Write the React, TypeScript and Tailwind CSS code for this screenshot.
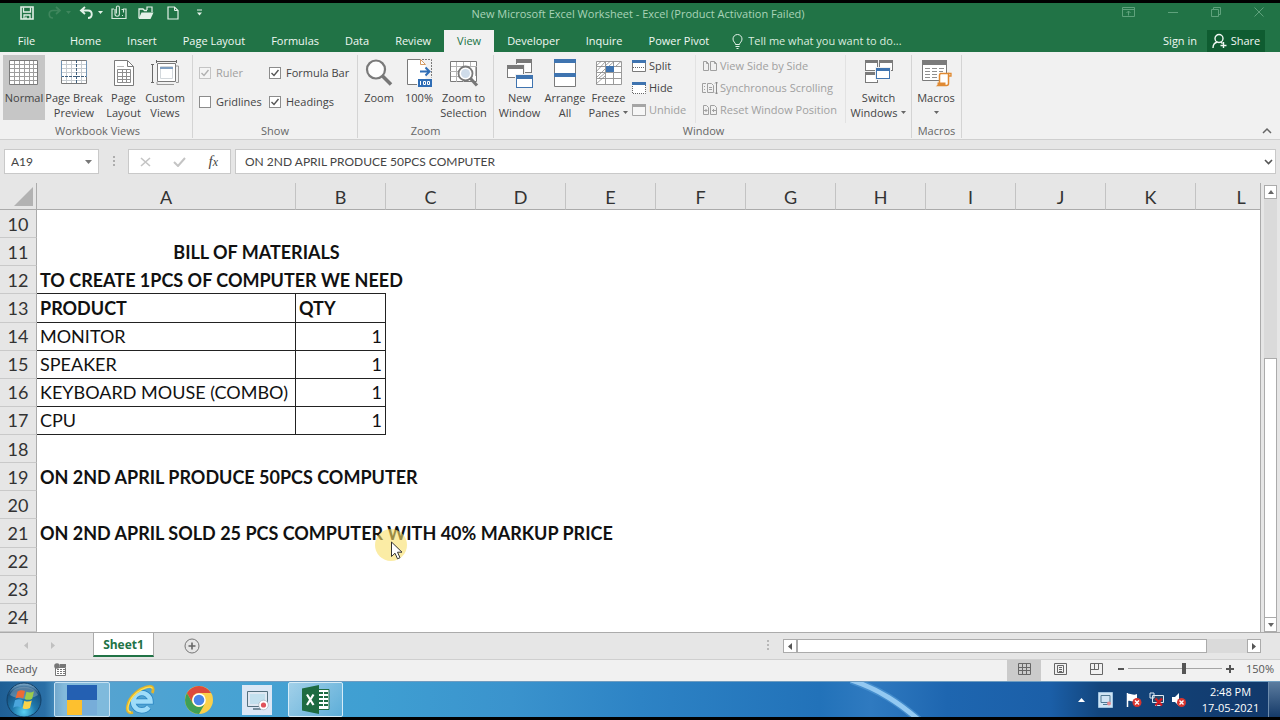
import React from "react";

type IconProps = { children: React.ReactNode; w?: number; h?: number };

function Svg({ children, w = 32, h = 32 }: IconProps) {
  return (
    <svg width={w} height={h} viewBox={`0 0 ${w} ${h}`} fill="none" aria-hidden="true" className="block shrink-0">
      {children}
    </svg>
  );
}

const GRAY = "#7a7a7a";
const BLUE = "#3f74b0";

/* ---------- quick access toolbar ---------- */

function SaveIcon() {
  return (
    <Svg w={14} h={14}>
      <path d="M1 1h12v12H1z" stroke="#e3f1e8" strokeWidth="1.6" />
      <path d="M3.5 1.5v4.5h7V1.5" stroke="#e3f1e8" strokeWidth="1.3" />
      <path d="M4 13V9h6v4M6 10.5V13" stroke="#e3f1e8" strokeWidth="1.3" />
    </Svg>
  );
}

function UndoIcon() {
  return (
    <Svg w={15} h={14}>
      <path d="M6 1L2 4.500l4 3.500M2.500 4.500H9c5 0 5 7.500 0 7.500" stroke="#e3f1e8" strokeWidth="1.9" />
    </Svg>
  );
}

function RedoIcon() {
  return (
    <Svg w={15} h={14}>
      <path d="M9 1l4 3.500-4 3.500M12.500 4.500H6c-5 0-5 7.500 0 7.500" stroke="#3f865d" strokeWidth="1.7" />
    </Svg>
  );
}

function Caret({ color }: { color: string }) {
  return (
    <Svg w={5} h={3}>
      <path d="M0 0h5L2.500 3z" fill={color} />
    </Svg>
  );
}

function AttachIcon() {
  return (
    <Svg w={16} h={15}>
      <path d="M3 4H1v9.500h14V4h-3" stroke="#d5e9dc" strokeWidth="1.2" />
      <path d="M4 4v5a2.200 2.200 0 004.400 0V2.500a1.500 1.500 0 00-3 0V8.500M10.500 4.500h2.500M12.500 4.500v3M11 10.500h1" stroke="#d5e9dc" strokeWidth="1.100" />
    </Svg>
  );
}

function FolderIcon() {
  return (
    <Svg w={16} h={14}>
      <path d="M1 12V3h4l1.500 1.500H9" stroke="#e3f1e8" strokeWidth="1.300" />
      <path d="M9 4V1h5v5" stroke="#e3f1e8" strokeWidth="1.200" />
      <path d="M3.500 6.500h12L12.500 13H.5z" fill="#e3f1e8" />
    </Svg>
  );
}

function NewPageIcon() {
  return (
    <Svg w={12} h={14}>
      <path d="M1 1h6.500L11 4.500V13H1z" stroke="#e3f1e8" strokeWidth="1.200" />
      <path d="M7.500 1v3.500H11" stroke="#e3f1e8" />
    </Svg>
  );
}

/* ---------- ribbon icons ---------- */

function NormalIcon() {
  return (
    <Svg>
      <path d="M1.500 2.500h28v24h-28z" fill="#fff" stroke={GRAY} />
      <path d="M2 6.500h27M2 10.500h27M2 14.500h27M2 18.500h27M2 22.500h27M6.500 3v23M11.500 3v23M16.500 3v23M21.500 3v23M25.500 3v23" stroke="#9d9d9d" />
    </Svg>
  );
}

function PageBreakIcon() {
  return (
    <Svg>
      <path d="M3.500 2.500h25v23h-25z" fill="#fff" stroke={GRAY} />
      <path d="M4 6.500h24M4 10.500h24M4 14.500h24M4 22.500h24M8.500 3v22M13.500 3v22M23.500 3v22" stroke="#c5cbd0" />
      <path d="M18.500 2v24M3 18.500h26" stroke="#3f5f7d" strokeDasharray="3 1" />
      <path d="M3.500 3v16M28.500 3v16" stroke="#6f93b5" />
    </Svg>
  );
}

function PageLayoutIcon() {
  return (
    <Svg>
      <path d="M6.500 2.500h13l6 6v19h-19z" fill="#fff" stroke={GRAY} />
      <path d="M19.500 3v5.500h6" stroke={GRAY} />
      <path d="M9.500 11.500h13v13h-13zM10 14.500h12M10 18.500h12M10 21.500h12M14.500 12v12M18.500 12v12" stroke="#8d8d8d" />
      <path d="M9 8.500h7" stroke="#b5b5b5" />
    </Svg>
  );
}

function CustomViewsIcon() {
  return (
    <Svg>
      <path d="M8.500 5.500h18v18h-18z" fill="#fff" stroke={GRAY} />
      <path d="M8 24v2.500h17M27 8h2.500v16.500H27" stroke="#9a9a9a" />
      <path d="M11.500 8.500h12v12h-12z" stroke="#d3d8dc" />
      <path d="M11 10h13" stroke="#7f9fc2" strokeWidth="2" />
      <path d="M3.500 7v17M2 6.500h3M2 24.500h3M8 3.500h19M7.500 2v3M27.500 2v3" stroke="#686868" />
    </Svg>
  );
}

function ZoomIcon() {
  return (
    <Svg>
      <circle cx="13" cy="11.500" r="9" fill="#fdfdfd" stroke={GRAY} strokeWidth="2.200" />
      <path d="M19.500 18l8.500 8.500" stroke="#777" strokeWidth="3.600" />
    </Svg>
  );
}

function HundredIcon() {
  return (
    <Svg>
      <path d="M4.500 1.500h13l5 5v20h-18z" fill="#fff" />
      <path d="M14 26.500H4.500v-25h13" stroke={GRAY} />
      <path d="M17.500 1.500v5h5" stroke="#d49a62" />
      <path d="M17.500 1.500l5 5" stroke="#d49a62" />
      <path d="M19 1.500h9.500v18" stroke={GRAY} strokeDasharray="2 1" />
      <path d="M17 13.500h9M22.500 9.500l4 4-4 4" stroke="#2f6db5" strokeWidth="2" />
      <path d="M15 21h14v8H15z" fill="#2f6db5" />
      <path d="M17.500 23v4M20.500 23.500h2v3h-2zM24.500 23.500h2v3h-2z" stroke="#fff" />
    </Svg>
  );
}

function ZoomSelectionIcon() {
  return (
    <Svg>
      <path d="M2.500 3.500h26v20h-26z" fill="#fff" stroke={GRAY} />
      <path d="M3 8.500h26M3 18.500h8M2 13.500h8M8.500 4v20M15.500 4v5M22.500 4v5M15.500 23v1M27.500 9v9" stroke="#b3b3b3" />
      <circle cx="17.500" cy="15.500" r="7" fill="#fff" stroke={GRAY} strokeWidth="1.800" />
      <circle cx="17.500" cy="15.500" r="4.500" fill="#cfdcea" />
      <path d="M22.500 20.500l6.500 7" stroke="#777" strokeWidth="3.200" />
    </Svg>
  );
}

function MiniWindow({ x, y, w, h, bar, barH = 4 }: { x: number; y: number; w: number; h: number; bar: string; barH?: number }) {
  return (
    <g>
      <rect x={x + 0.5} y={y + 0.5} width={w - 1} height={h - 1} fill="#fff" stroke={bar} />
      <rect x={x} y={y} width={w} height={barH} fill={bar} />
    </g>
  );
}

function NewWindowIcon() {
  return (
    <Svg>
      <MiniWindow x={12} y={1} w={16} h={14} bar={GRAY} />
      <path d="M2 6h19v16H2z" fill="#f1f1f1" />
      <MiniWindow x={3} y={7} w={17} h={13} bar={GRAY} />
      <path d="M11 16h19v15H11z" fill="#f1f1f1" />
      <MiniWindow x={12} y={17} w={17} h={13} bar={BLUE} />
    </Svg>
  );
}

function ArrangeIcon() {
  return (
    <Svg>
      <path d="M5.500 2.500h21v26h-21z" fill="#fff" stroke={GRAY} />
      <path d="M5 1h22v4H5zM5 15h22v4H5z" fill={BLUE} />
    </Svg>
  );
}

function FreezeIcon() {
  return (
    <Svg>
      <path d="M3.500 3.500h25v23h-25z" fill="#fff" stroke="#9a9a9a" />
      <path d="M3 8.500h26M3 14.500h26M3 20.500h26M12.500 3v24M20.500 3v24" stroke="#9a9a9a" />
      <path d="M3 8l5-4.500M3 14l9-10M3 20l9-9M3 26l9-8M12 8l5-4.500M16 8l5-4.500M23 8l5-4.500M6 20l6-5" stroke="#8a8a8a" strokeWidth=".8" />
      <path d="M13 8h8v6h-8z" fill={BLUE} />
    </Svg>
  );
}

function SwitchIcon() {
  return (
    <Svg>
      <MiniWindow x={2} y={2} w={13} h={11} bar={GRAY} barH={3} />
      <MiniWindow x={16} y={2} w={14} h={11} bar={GRAY} barH={3} />
      <MiniWindow x={2} y={14} w={13} h={11} bar={GRAY} barH={3} />
      <path d="M12 9h16v13H12z" fill="#f1f1f1" />
      <MiniWindow x={13} y={10} w={14} h={11} bar={BLUE} barH={3} />
    </Svg>
  );
}

function MacrosIcon() {
  return (
    <Svg>
      <path d="M2.500 3.500h24v19h-24z" fill="#fff" stroke={GRAY} />
      <path d="M2 2h25v5H2z" fill={GRAY} />
      <path d="M5 10.500h5M12 10.500h5M19 10.500h5M5 13.500h5M12 13.500h5M19 13.500h4M5 16.500h5M12 16.500h5M5 19.500h5M12 19.500h5" stroke="#8f8f8f" />
      <path d="M20.500 15.500h8v10a2 2 0 01-2 2h-8a2 2 0 001-2v-8a2 2 0 011-2z" fill="#fff" stroke="#e08a33" strokeWidth="1.500" />
      <path d="M17.500 24.500h8v3.500h-8z" fill="#e08a33" />
      <path d="M28 15.500h3v2.500h-3" stroke="#e08a33" strokeWidth="1.300" />
    </Svg>
  );
}

function SplitIcon() {
  return (
    <Svg w={16} h={14}>
      <path d="M1.500 1.500h13v11h-13z" fill="#fff" stroke={GRAY} />
      <path d="M1 1h14v3H1z" fill={BLUE} />
      <path d="M2 8.500h12" stroke="#666" strokeDasharray="1 1" />
    </Svg>
  );
}

function HideIcon() {
  return (
    <Svg w={16} h={14}>
      <path d="M1.500 3v9.500h13V3" fill="#fff" stroke="#666" strokeDasharray="1 1" />
      <path d="M1 1h14v3H1z" fill={BLUE} />
    </Svg>
  );
}

function UnhideIcon() {
  return (
    <Svg w={16} h={14}>
      <path d="M1.500 1.500h13v11h-13z" fill="#f6f6f6" stroke="#a5a5a5" />
      <path d="M1 1h14v3H1z" fill="#a5a5a5" />
    </Svg>
  );
}

function SideBySideIcon() {
  return (
    <Svg w={16} h={14}>
      <path d="M1.500 2.500h3l2 2v7h-5zM8.500 2.500h4l2 2v7h-6z" stroke="#a0a0a0" />
      <path d="M4.500 2.500v2h2M12.500 2.500v2h2" stroke="#a0a0a0" />
    </Svg>
  );
}

function SyncIcon() {
  return (
    <Svg w={16} h={14}>
      <path d="M4 2.500H.5v9H4M5.500 2.500h4l2 2v7h-6z" stroke="#a0a0a0" />
      <path d="M2 5.500h1M2 8.500h1M7 6.500h3M7 8.500h3" stroke="#a0a0a0" />
      <path d="M14.500 1v12M13 2.500l1.500-1.500L16 2.500M13 11.500l1.500 1.500 1.500-1.500" stroke="#8c8c8c" />
    </Svg>
  );
}

function ResetIcon() {
  return (
    <Svg w={16} h={14}>
      <path d="M1.500 2.500h3l2 2v7h-5zM8.500 2.500h4l2 2v7h-6z" stroke="#a0a0a0" />
      <path d="M2 7.500h3.500M4 6v3M10 7.500h4M11.500 6v3" stroke="#a0a0a0" />
    </Svg>
  );
}

/* ---------- ribbon building blocks ---------- */

function BigButton({ icon, lines, width, active, caret }: { icon: React.ReactNode; lines: string[]; width: string; active?: boolean; caret?: boolean }) {
  return (
    <button type="button" className={`flex h-[65px] shrink-0 flex-col items-center pt-[3px] leading-[15px] ${width} ${active ? "bg-[#c6c6c6]" : ""}`}>
      {icon}
      <span className="whitespace-nowrap">{lines[0]}</span>
      <span className="flex h-[15px] items-center gap-1 whitespace-nowrap">
        {lines[1]}
        {caret && <Caret color="#666" />}
      </span>
    </button>
  );
}

function Group({ label, width, children }: { label: string; width: string; children: React.ReactNode }) {
  return (
    <section aria-label={label} className={`flex shrink-0 flex-col border-r border-[#d4d4d4] ${width}`}>
      <div className="flex h-[68px]">{children}</div>
      <div className="text-center leading-[15px] text-[#666]">{label}</div>
    </section>
  );
}

function Check({ label, checked, disabled }: { label: string; checked?: boolean; disabled?: boolean }) {
  return (
    <label className={`flex items-center gap-[5px] whitespace-nowrap ${disabled ? "text-[#a0a0a0]" : ""}`}>
      <span className="grid">
        <input
          type="checkbox"
          defaultChecked={checked}
          disabled={disabled}
          className="peer col-start-1 row-start-1 size-3 appearance-none border border-[#8c8c8c] bg-white disabled:border-[#c4c4c4] disabled:bg-[#f4f4f4]"
        />
        <svg viewBox="0 0 12 12" fill="none" aria-hidden="true" className="pointer-events-none invisible col-start-1 row-start-1 size-3 peer-checked:visible">
          <path d="M2.500 6l2.500 2.500L9.500 3" stroke={disabled ? "#b0b0b0" : "#555"} strokeWidth="1.400" />
        </svg>
      </span>
      {label}
    </label>
  );
}

function SmallButton({ icon, label, disabled }: { icon: React.ReactNode; label: string; disabled?: boolean }) {
  return (
    <button type="button" disabled={disabled} className="flex h-[22px] items-center gap-[2px] whitespace-nowrap disabled:text-[#a0a0a0]">
      {icon}
      {label}
    </button>
  );
}

/* ---------- header ---------- */

const tabs = ["Home", "Insert", "Page Layout", "Formulas", "Data", "Review", "View", "Developer", "Inquire", "Power Pivot"];

function TitleBar() {
  return (
    <div className="grid h-[27px] grid-cols-[1fr_auto_1fr] items-start">
      <div className="flex h-[19px] items-center pl-5">
        <button type="button" aria-label="Save" className="mr-[13px]"><SaveIcon /></button>
        <button type="button" aria-label="Redo" className="mr-2 flex items-center gap-1"><RedoIcon /><Caret color="#3f865d" /></button>
        <button type="button" aria-label="Undo" className="mr-2 flex items-center gap-1"><UndoIcon /><Caret color="#e3f1e8" /></button>
        <button type="button" aria-label="Attach" className="mr-[11px]"><AttachIcon /></button>
        <button type="button" aria-label="Open" className="mr-[13px]"><FolderIcon /></button>
        <button type="button" aria-label="New" className="mr-[18px]"><NewPageIcon /></button>
        <button type="button" aria-label="Customize toolbar">
          <Svg w={5} h={7}><path d="M0 1h5" stroke="#e3f1e8" /><path d="M0 3.500h5L2.500 6.500z" fill="#e3f1e8" /></Svg>
        </button>
      </div>
      <h1 className="pr-1 text-[11px] leading-[22px] text-[#a9d3b8]">New Microsoft Excel Worksheet - Excel (Product Activation Failed)</h1>
      <div className="flex h-[18px] items-center justify-end gap-[33px] pr-4">
        <button type="button" aria-label="Ribbon display options">
          <Svg w={13} h={10}><path d="M.5 .5h12v9H.5zM.5 2.500h12M6.500 8.500V4M4.500 6l2-2 2 2" stroke="#5fa27c" /></Svg>
        </button>
        <button type="button" aria-label="Minimize"><Svg w={10} h={10}><path d="M0 5.500h10" stroke="#5fa27c" /></Svg></button>
        <button type="button" aria-label="Restore"><Svg w={10} h={10}><path d="M.5 2.500h7v7h-7zM2.500 2.500v-2h7v7h-2" stroke="#5fa27c" /></Svg></button>
        <button type="button" aria-label="Close"><Svg w={10} h={10}><path d="M.5 .5l9 9M9.500 .5l-9 9" stroke="#5fa27c" /></Svg></button>
      </div>
    </div>
  );
}

function TabStrip() {
  return (
    <nav aria-label="Ribbon tabs" className="flex h-[22px] items-stretch whitespace-nowrap text-[11px] text-[#f0f8f3]">
      <button type="button" className="w-[53px] pt-px text-center">File</button>
      <div className="flex pl-1">
        {tabs.map((t) => (
          <button key={t} type="button" className={`px-[13px] ${t === "View" ? "bg-[#f1f1f1] text-[#217346]" : ""}`}>
            {t}
          </button>
        ))}
      </div>
      <label className="ml-[10px] flex flex-1 items-center gap-[5px]">
        <Svg w={11} h={15}>
          <path d="M3.500 10.500c0-2-2.500-2.500-2.500-5.500a4.500 4.500 0 019 0c0 3-2.500 3.500-2.500 5.500zM3.500 12.500h4M4.500 14.500h2" stroke="#e3f1e8" />
        </Svg>
        <input aria-label="Tell me" placeholder="Tell me what you want to do..." className="w-full bg-transparent outline-none placeholder:text-[#d9ecdf]" />
      </label>
      <button type="button" className="mr-[9px] px-px">Sign in</button>
      <button type="button" className="mr-[15px] flex w-[58px] items-center justify-center gap-1 bg-[#0f5c31]">
        <Svg w={15} h={16}>
          <circle cx="7" cy="5.500" r="4" stroke="#f0f8f3" strokeWidth="1.400" />
          <path d="M1 15c0-4 2-5.500 4.500-6M8.500 9l2 1.500M11.500 9v6M8.500 12.500h6" stroke="#f0f8f3" strokeWidth="1.400" />
        </Svg>
        Share
      </button>
    </nav>
  );
}

function Ribbon() {
  return (
    <div className="flex border-b border-[#cfcfcf] bg-[#f1f1f1] pt-[3px] pb-px text-[11px] text-[#444]">
      <Group label="Workbook Views" width="w-[193px] pl-[3px]">
        <BigButton icon={<NormalIcon />} lines={["Normal", ""]} width="w-[42px]" active />
        <BigButton icon={<PageBreakIcon />} lines={["Page Break", "Preview"]} width="w-[58px]" />
        <BigButton icon={<PageLayoutIcon />} lines={["Page", "Layout"]} width="w-[41px]" />
        <BigButton icon={<CustomViewsIcon />} lines={["Custom", "Views"]} width="w-[42px]" />
      </Group>
      <Group label="Show" width="w-[165px]">
        <div className="grid grid-cols-[70px_auto] content-start gap-y-[13px] pl-[6px] pt-[10px] leading-4">
          <Check label="Ruler" checked disabled />
          <Check label="Formula Bar" checked />
          <Check label="Gridlines" />
          <Check label="Headings" checked />
        </div>
      </Group>
      <Group label="Zoom" width="w-[136px]">
        <BigButton icon={<ZoomIcon />} lines={["Zoom", ""]} width="w-[42px]" />
        <BigButton icon={<HundredIcon />} lines={["100%", ""]} width="w-[38px]" />
        <BigButton icon={<ZoomSelectionIcon />} lines={["Zoom to", "Selection"]} width="w-[51px]" />
      </Group>
      <Group label="Window" width="w-[418px] pl-[2px]">
        <BigButton icon={<NewWindowIcon />} lines={["New", "Window"]} width="w-[47px]" />
        <BigButton icon={<ArrangeIcon />} lines={["Arrange", "All"]} width="w-[44px]" />
        <BigButton icon={<FreezeIcon />} lines={["Freeze", "Panes"]} width="w-[43px]" caret />
        <div className="ml-px flex w-[65px] flex-col border-r border-[#e2e2e2]">
          <SmallButton icon={<SplitIcon />} label="Split" />
          <SmallButton icon={<HideIcon />} label="Hide" />
          <SmallButton icon={<UnhideIcon />} label="Unhide" disabled />
        </div>
        <div className="flex w-[150px] flex-col border-r border-[#e2e2e2] pl-[6px]">
          <SmallButton icon={<SideBySideIcon />} label="View Side by Side" disabled />
          <SmallButton icon={<SyncIcon />} label="Synchronous Scrolling" disabled />
          <SmallButton icon={<ResetIcon />} label="Reset Window Position" disabled />
        </div>
        <BigButton icon={<SwitchIcon />} lines={["Switch", "Windows"]} width="w-[65px]" caret />
      </Group>
      <Group label="Macros" width="w-[50px]">
        <BigButton icon={<MacrosIcon />} lines={["Macros", ""]} width="w-[48px]" caret />
      </Group>
      <div className="flex flex-1 items-end justify-end pr-2 pb-1">
        <button type="button" aria-label="Collapse the ribbon">
          <Svg w={10} h={7}><path d="M1 6l4-4 4 4" stroke="#666" strokeWidth="1.500" /></Svg>
        </button>
      </div>
    </div>
  );
}

function FormulaBar() {
  return (
    <div className="flex h-[43px] items-start bg-[#e6e6e6] pl-1 pr-1 pt-[9px] text-[11px] text-[#444]">
      <div className="flex h-[25px] w-[95px] items-center border border-[#c9c9c9] bg-white pl-[6px] pr-[6px]">
        <input aria-label="Name box" defaultValue="A19" className="w-full min-w-0 bg-transparent font-[Lato,'Open_Sans',sans-serif] text-[12px] outline-none" />
        <button type="button" aria-label="Names"><Svg w={7} h={4}><path d="M0 0h7L3.500 4z" fill="#777" /></Svg></button>
      </div>
      <div className="flex h-[25px] w-[29px] items-center justify-center">
        <Svg w={2} h={11}><path d="M1 0v11" stroke="#9a9a9a" strokeWidth="1.500" strokeDasharray="2 2" /></Svg>
      </div>
      <div className="mr-1 flex h-[25px] w-[103px] items-center justify-between border border-[#c9c9c9] bg-white pl-[11px] pr-[12px]">
        <button type="button" aria-label="Cancel"><Svg w={11} h={10}><path d="M1 1l9 8M10 1L1 9" stroke="#c4c4c4" strokeWidth="1.600" /></Svg></button>
        <button type="button" aria-label="Enter"><Svg w={13} h={10}><path d="M1 5l4 4 7-8" stroke="#c4c4c4" strokeWidth="2" /></Svg></button>
        <button type="button" aria-label="Insert function" className="font-['Liberation_Serif',serif] text-[15px] leading-4 italic">
          f<span className="text-[12px]">x</span>
        </button>
      </div>
      <div className="flex h-[25px] flex-1 items-center border border-[#c9c9c9] bg-white pl-[9px] pr-[2px]">
        <input aria-label="Formula bar" defaultValue="ON 2ND APRIL PRODUCE 50PCS COMPUTER" className="w-full bg-transparent font-[Lato,'Open_Sans',sans-serif] text-[12px] outline-none" />
        <button type="button" aria-label="Expand formula bar"><Svg w={9} h={6}><path d="M1 1l3.500 3.500L8 1" stroke="#555" strokeWidth="1.600" /></Svg></button>
      </div>
    </div>
  );
}

/* ---------- worksheet ---------- */

const columns = ["A", "B", "C", "D", "E", "F", "G", "H", "I", "J", "K", "L"];

type Row = { n: number; a?: string; b?: string; bold?: boolean; boxed?: boolean; merged?: boolean };

const rows: Row[] = [
  { n: 10 },
  { n: 11, a: "BILL OF MATERIALS", bold: true, merged: true },
  { n: 12, a: "TO CREATE 1PCS OF COMPUTER WE NEED", bold: true },
  { n: 13, a: "PRODUCT", b: "QTY", bold: true, boxed: true },
  { n: 14, a: "MONITOR", b: "1", boxed: true },
  { n: 15, a: "SPEAKER", b: "1", boxed: true },
  { n: 16, a: "KEYBOARD MOUSE (COMBO)", b: "1", boxed: true },
  { n: 17, a: "CPU", b: "1", boxed: true },
  { n: 18 },
  { n: 19, a: "ON 2ND APRIL PRODUCE 50PCS COMPUTER", bold: true },
  { n: 20 },
  { n: 21, a: "ON 2ND APRIL SOLD 25 PCS COMPUTER WITH 40% MARKUP PRICE", bold: true },
  { n: 22 },
  { n: 23 },
  { n: 24 },
];

function Pointer() {
  return (
    <div className="pointer-events-none absolute left-[338px] top-[10px]">
      <svg width="34" height="38" viewBox="0 0 34 38" aria-hidden="true">
        <circle cx="16" cy="16" r="16" fill="#f8df69" fillOpacity=".6" />
        <path d="M16.500 13v14.500l3.500-3.300 2.500 5.600 2.500-1.100-2.500-5.500h4.500z" fill="#fff" stroke="#333" />
      </svg>
    </div>
  );
}

function Sheet() {
  return (
    <div className="flex bg-[#e6e6e6]">
      <div className="min-w-0 flex-1 overflow-hidden border-r border-[#ababab]">
        <table className="h-[449px] w-full table-fixed border-separate border-spacing-0 text-[18px] leading-[24px] font-[Lato,Carlito,'Open_Sans',sans-serif] text-[#111]">
          <colgroup>
            <col className="w-[37px]" />
            <col className="w-[259px]" />
            {columns.slice(1, 11).map((c) => (
              <col key={c} className="w-[90px]" />
            ))}
            <col />
          </colgroup>
          <thead>
            <tr className="h-[27px]">
              <th className="border-r border-b border-[#ababab] bg-[#e6e6e6] p-0">
                <div className="flex justify-end pr-[3px]">
                  <Svg w={19} h={19}><path d="M19 0v19H0z" fill="#b2b2b2" /></Svg>
                </div>
              </th>
              {columns.map((c) => (
                <th key={c} scope="col" className="overflow-hidden border-r border-b border-r-[#c3c3c3] border-b-[#ababab] bg-[#e6e6e6] p-0 pt-[2px] font-normal text-[#333] last:border-r-0">
                  {c === "L" ? <div className="w-[90px]">{c}</div> : c}
                </th>
              ))}
            </tr>
          </thead>
          <tbody className="bg-white">
            {rows.map((r) => (
              <tr key={r.n}>
                <th scope="row" className="border-r border-b border-r-[#ababab] border-b-[#c9c9c9] bg-[#e6e6e6] p-0 font-normal text-[#333]">{r.n}</th>
                <td
                  colSpan={r.merged ? 3 : 1}
                  className={`relative p-0 whitespace-nowrap ${r.bold ? "font-bold" : ""} ${r.merged ? "text-center" : "pl-[3px]"} ${r.boxed || r.n === 12 ? "border-b border-[#222]" : ""} ${r.boxed ? "border-r" : ""}`}
                >
                  {r.a}
                  {r.n === 21 && <Pointer />}
                </td>
                {!r.merged && (
                  <td className={`p-0 px-[3px] ${r.b === "1" ? "text-right" : ""} ${r.bold ? "font-bold" : ""} ${r.boxed || r.n === 12 ? "border-b border-[#222]" : ""} ${r.boxed ? "border-r" : ""}`}>
                    {r.b}
                  </td>
                )}
                <td colSpan={r.merged ? 9 : 10} className="p-0" />
              </tr>
            ))}
          </tbody>
        </table>
      </div>
      <div className="flex w-[19px] flex-col px-[3px] pt-[2px]">
        <button type="button" aria-label="Scroll up" className="flex h-[14px] items-center justify-center border border-[#ababab] bg-white">
          <Svg w={6} h={4}><path d="M0 4h6L3 0z" fill="#666" /></Svg>
        </button>
        <div className="flex flex-1 flex-col justify-end bg-[#dadada]">
          <div className="h-[62%] border border-[#ababab] bg-white" />
        </div>
        <button type="button" aria-label="Scroll down" className="flex h-[14px] items-center justify-center border border-t-0 border-[#ababab] bg-white">
          <Svg w={6} h={4}><path d="M0 0h6L3 4z" fill="#666" /></Svg>
        </button>
      </div>
    </div>
  );
}

function SheetTabs() {
  return (
    <div className="flex h-[27px] border-t border-[#ababab] bg-[#e6e6e6]">
      <div className="flex h-[25px] w-[93px] items-center gap-[23px] pl-6">
        <button type="button" aria-label="Previous sheet"><Svg w={4} h={7}><path d="M4 0v7L0 3.500z" fill="#c0c0c0" /></Svg></button>
        <button type="button" aria-label="Next sheet"><Svg w={4} h={7}><path d="M0 0v7l4-3.500z" fill="#c0c0c0" /></Svg></button>
      </div>
      <button type="button" className="h-[24px] w-[61px] border-x border-b-2 border-x-[#ababab] border-b-[#217346] bg-white pt-px text-[12px] leading-4 font-bold text-[#217346]">Sheet1</button>
      <button type="button" aria-label="New sheet" className="ml-[30px] h-[25px]">
        <Svg w={16} h={16}><circle cx="8" cy="8" r="7" stroke="#777" /><path d="M4.500 8h7M8 4.500v7" stroke="#666" strokeWidth="1.600" /></Svg>
      </button>
      <div className="flex flex-1 items-center justify-end pr-[14px] pb-px">
        <Svg w={2} h={11}><path d="M1 0v11" stroke="#a8a8a8" strokeWidth="1.500" strokeDasharray="2 2" /></Svg>
      </div>
      <div className="mr-[19px] mt-[6px] flex h-[14px] w-[478px]">
        <button type="button" aria-label="Scroll left" className="flex w-[14px] items-center justify-center border border-[#ababab] bg-white"><Svg w={4} h={7}><path d="M4 0v7L0 3.500z" fill="#555" /></Svg></button>
        <div className="flex-1 bg-[#dadada]">
          <div className="h-full w-[91%] border border-[#ababab] bg-white" />
        </div>
        <button type="button" aria-label="Scroll right" className="flex w-[14px] items-center justify-center border border-[#ababab] bg-white"><Svg w={4} h={7}><path d="M0 0v7l4-3.500z" fill="#555" /></Svg></button>
      </div>
    </div>
  );
}

function StatusBar() {
  return (
    <div className="flex h-[22px] items-stretch border-t border-[#cfcfcf] bg-[#f1f1f1] pl-[6px] pr-[6px] text-[11px] text-[#555]">
      <span className="flex w-[48px] items-center pb-[3px]">Ready</span>
      <button type="button" aria-label="Record macro" className="pb-[3px]">
        <Svg w={12} h={13}>
          <path d="M1.500 4.500h10v8h-10z" fill="#fff" stroke="#777" />
          <path d="M6 1h6v3H6z" fill="#777" />
          <path d="M3 6.500h2M6 6.500h2M3 8.500h2M6 8.500h2M3 10.500h2M6 10.500h2M9 6.500h2M9 8.500h2M9 10.500h2" stroke="#777" />
          <circle cx="3" cy="3" r="2.800" fill="#777" />
        </Svg>
      </button>
      <div className="flex-1" />
      <button type="button" aria-label="Normal view" className="flex w-[34px] items-center justify-center bg-[#cbcbcb] pb-[3px]">
        <Svg w={13} h={12}><path d="M.5 .5h12v11H.5zM.5 4.500h12M.5 7.500h12M4.500 .5v11M8.500 .5v11" stroke="#666" /></Svg>
      </button>
      <button type="button" aria-label="Page layout view" className="flex w-[38px] items-center justify-center pb-[3px]">
        <Svg w={13} h={12}><path d="M.5 .5h12v11H.5zM3.500 2.500h6v7h-6zM5 4.500h3M5 6.500h3M5 8.500h3" stroke="#666" /></Svg>
      </button>
      <button type="button" aria-label="Page break preview" className="flex w-[34px] items-center justify-center pb-[3px]">
        <Svg w={13} h={12}><path d="M.5 .5h12v11H.5zM.5 6.500h8v-6M4.500 .5v6" stroke="#666" /></Svg>
      </button>
      <button type="button" aria-label="Zoom out" className="ml-[5px] pb-[3px]"><Svg w={6} h={8}><path d="M0 4h6" stroke="#555" strokeWidth="2" /></Svg></button>
      <input
        type="range"
        aria-label="Zoom"
        min={0}
        max={100}
        defaultValue={60}
        className="mx-1 mt-[8px] h-px w-[94px] appearance-none self-start bg-[#a5a5a5] [&::-webkit-slider-thumb]:h-[11px] [&::-webkit-slider-thumb]:w-1 [&::-webkit-slider-thumb]:appearance-none [&::-webkit-slider-thumb]:bg-[#555]"
      />
      <button type="button" aria-label="Zoom in" className="mr-3 pb-[3px]"><Svg w={8} h={8}><path d="M0 4h8M4 0v8" stroke="#555" strokeWidth="2" /></Svg></button>
      <span className="flex items-center pb-[3px]">150%</span>
    </div>
  );
}

/* ---------- taskbar ---------- */

function StartOrb() {
  return (
    <Svg w={36} h={36}>
      <defs>
        <radialGradient id="orb" cx=".5" cy=".85" r=".85">
          <stop offset="0" stopColor="#58d0f2" />
          <stop offset=".4" stopColor="#1f78ac" />
          <stop offset=".8" stopColor="#174f7d" />
          <stop offset="1" stopColor="#8fb9d6" />
        </radialGradient>
      </defs>
      <circle cx="18" cy="18" r="17" fill="url(#orb)" stroke="#123f66" />
      <path d="M4 13C8 2 28 2 32 13c-8 5-20 5-28 0z" fill="#fff" fillOpacity=".25" />
      <path d="M11.500 9.500c3-2 5.500-1.500 7.500-.5l-1.800 7.500c-2.500-1.200-5-1.200-7.700 0z" fill="#ee6a35" />
      <path d="M20.500 9.700c3 1.300 5 1 7.500-.5l-1.800 7.500c-2.800 1.500-5 1.500-7.500.3z" fill="#9ccb4c" />
      <path d="M9 18.300c3-1.500 5.500-1.200 7.800 0L15 25.500c-2.500-1.200-5-1.200-7.800.2z" fill="#4aa5dc" />
      <path d="M18.300 18.700c2.700 1.300 5 1.100 7.500-.2L24 26c-2.500 1.500-5 1.300-7.400.2z" fill="#fcd34a" />
    </Svg>
  );
}

function IeIcon() {
  return (
    <Svg w={32} h={32}>
      <path d="M8 17.500h17.500a8.700 8.700 0 10-1.800 5.500" stroke="#2a86c4" strokeWidth="6.200" />
      <path d="M9 17.500h16.500a8.700 8.700 0 10-1.800 5.500" stroke="#9edcf9" strokeWidth="4.600" />
      <path d="M8 28.500C-1 31 1 17 11 8.500 18 3 27 .5 28 4.500c.3 1.500 0 3-.8 4.500" stroke="#e2b52b" strokeWidth="2.800" />
      <path d="M6 28C0 28 3 16 12 8.500 18 3.800 26 1.500 27.500 4.500" stroke="#fbe15a" strokeWidth="1.300" />
    </Svg>
  );
}

function ChromeIcon() {
  return (
    <Svg w={30} h={30}>
      <circle cx="15" cy="15" r="14" fill="#fbd04b" />
      <path d="M2.900 8A14 14 0 0127.100 8H15a7 7 0 00-6.100 10.500z" fill="#dc4a3d" />
      <path d="M2.900 8A14 14 0 0015 29l6-10.500a7 7 0 01-12.100 0z" fill="#3f9f55" />
      <circle cx="15" cy="15" r="6.800" fill="#fff" />
      <circle cx="15" cy="15" r="5.300" fill="#4a86e8" />
    </Svg>
  );
}

function RecorderIcon() {
  return (
    <Svg w={30} h={30}>
      <path d="M0 0h30v30H0z" fill="#dbe7f5" />
      <path d="M5.500 6.500h20v15h-20z" fill="#dfe8f2" stroke="#55707f" />
      <path d="M8 9h15v10H8z" fill="#c3e0ee" />
      <path d="M11 24h8" stroke="#55707f" strokeWidth="1.500" />
      <circle cx="21.500" cy="20" r="4.800" fill="#fff" stroke="#9aa7b5" strokeWidth=".6" />
      <circle cx="21.500" cy="20" r="2.600" fill="#e0525a" />
    </Svg>
  );
}

function ExcelIcon() {
  return (
    <Svg w={28} h={30}>
      <path d="M15 4.500h12v20H15z" fill="#fff" stroke="#1e6b41" />
      <path d="M17 8h4M22 8h4M17 12h4M22 12h4M17 16h4M22 16h4M17 20h4M22 20h4" stroke="#1e6b41" strokeWidth="1.800" />
      <path d="M0 3.500L17 0v29L0 25.500z" fill="#1e6b41" />
      <path d="M5 9.500l6.500 10.500M11.500 9.500L5 20" stroke="#fff" strokeWidth="2.200" />
    </Svg>
  );
}

function RedCross({ x, y }: { x: number; y: number }) {
  return (
    <g>
      <circle cx={x} cy={y} r="4.500" fill="#d9352f" />
      <path d={`M${x - 2} ${y - 2}l4 4M${x + 2} ${y - 2}l-4 4`} stroke="#fff" strokeWidth="1.400" />
    </g>
  );
}

function Taskbar() {
  return (
    <div className="relative flex h-[36px] items-stretch overflow-hidden border-t border-[#6f9cc0] bg-[linear-gradient(90deg,#1f5f95_0,#2a6fa6_3.500%,#5aa3cf_5%,#4aa3d3_15%,#3f9fd2_29%,#3a93cd_40%,#2d83c5_50%,#2272b9_64%,#2f7ac0_68%,#1e66b0_74%,#1b5fa8_82%,#12457c_86%,#12386a_100%)]">
      <svg className="absolute left-[66%] top-0 h-full w-[80px]" viewBox="0 0 80 36" fill="none" aria-hidden="true">
        <path d="M5 -2C35 8 55 22 76 40" stroke="#5ba3de" strokeWidth="8" strokeOpacity=".5" />
        <path d="M5 -2C35 8 55 22 76 40" stroke="#93c9f2" strokeWidth="5" />
      </svg>
      <button type="button" aria-label="Start" className="ml-[6px] mr-3 flex items-center"><StartOrb /></button>
      <button type="button" aria-label="Open window" className="flex w-[56px] items-center justify-center rounded-[2px] border border-[#c6e2f3] bg-[#ffffff40]">
        <Svg w={30} h={30}><path d="M0 0h30v15H0z" fill="#2460b2" /><path d="M0 15h15v15H0z" fill="#fdc02f" /><path d="M15 15h15v15H15z" fill="#77add9" /></Svg>
      </button>
      <button type="button" aria-label="Internet Explorer" className="ml-[15px] flex items-center"><IeIcon /></button>
      <button type="button" aria-label="Chrome" className="ml-[27px] flex items-center"><ChromeIcon /></button>
      <button type="button" aria-label="Screen recorder" className="ml-[28px] flex items-center"><RecorderIcon /></button>
      <button type="button" aria-label="Excel" className="ml-4 flex w-[55px] items-center justify-center rounded-[2px] border border-[#d6ecf8] bg-[linear-gradient(135deg,#ffffff80,#ffffff26)]"><ExcelIcon /></button>
      <div className="flex-1" />
      <div className="relative flex items-center">
        <button type="button" aria-label="Show hidden icons" className="mr-[13px]"><Svg w={7} h={4}><path d="M0 4h7L3.500 0z" fill="#fff" /></Svg></button>
        <Svg w={15} h={16}><path d="M.5 .5h14v15H.5z" fill="#cfe4f4" stroke="#9fc3df" /><path d="M3 3.500h9v7H3zM5 12.500h5" stroke="#4f7893" /><circle cx="11" cy="11.500" r="2" fill="#e58a90" /></Svg>
        <span className="ml-[13px]"><Svg w={16} h={16}><path d="M1.500 1v14" stroke="#fff" strokeWidth="1.500" /><path d="M2 2c3-1 5 2 9 0v7c-4 2-6-1-9 0z" fill="#fff" /><RedCross x={11} y={10.5} /></Svg></span>
        <span className="ml-[7px]"><Svg w={16} h={16}><path d="M3.500 3.500h11v7h-11z" fill="#27496b" stroke="#dfe9f2" /><path d="M1 1h4v5H1zM6 13.500h6" stroke="#dfe9f2" /><path d="M6.500 6.500l6.500 7M13 6.500l-6.500 7" stroke="#d41c22" strokeWidth="2.400" /></Svg></span>
        <span className="ml-[6px]"><Svg w={16} h={16}><path d="M1 5h3l4-4v13l-4-4H1z" fill="#fff" /><RedCross x={10.5} y={10.5} /></Svg></span>
        <div className="ml-3 w-[63px] text-center text-[11px] leading-4 text-white">
          <div>2:48 PM</div>
          <div>17-05-2021</div>
        </div>
        <button type="button" aria-label="Show desktop" className="ml-[6px] h-full w-[12px] border-l border-[#6d8bac] bg-[linear-gradient(180deg,#5c7c9f,#153a68)]" />
      </div>
    </div>
  );
}

export default function App() {
  return (
    <main className="flex min-h-screen flex-col bg-black py-[3px] font-['Open_Sans','Noto_Sans',sans-serif]">
      <header className="bg-[#217346]">
        <TitleBar />
        <TabStrip />
      </header>
      <Ribbon />
      <FormulaBar />
      <Sheet />
      <SheetTabs />
      <StatusBar />
      <Taskbar />
    </main>
  );
}
